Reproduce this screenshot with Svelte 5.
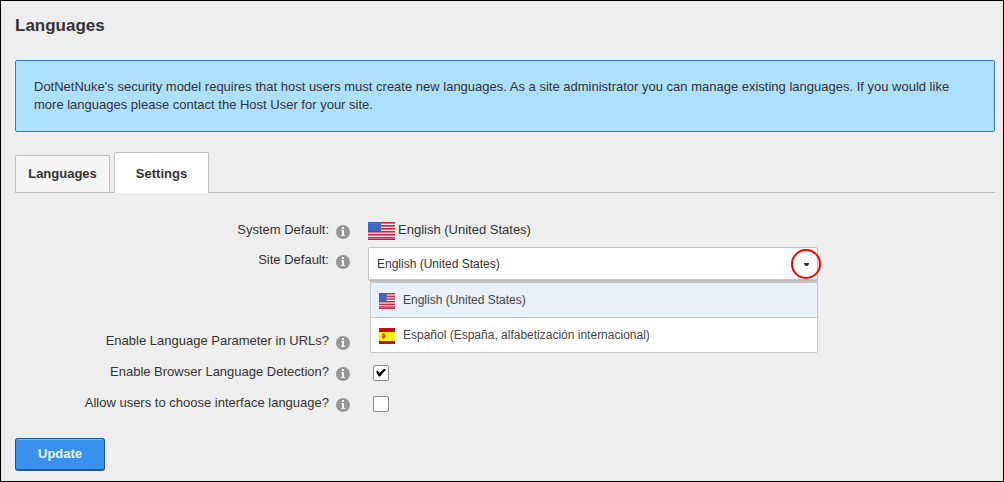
<script>
  const languages = [
    { code: 'en-US', name: 'English (United States)' },
    { code: 'es-ES', name: 'Español (España, alfabetización internacional)' }
  ];

  let siteDefault = $state('en-US');
  let urlParameter = $state(true);
  let browserDetection = $state(true);
  let userChoice = $state(false);
</script>

{#snippet usFlag(cls)}
  <svg class={cls} viewBox="0 0 27 18" preserveAspectRatio="none" aria-hidden="true">
    <rect width="27" height="18" fill="#f7e3e8" />
    {#each [0, 3, 6, 9, 12, 15] as y}
      <rect {y} width="27" height="1.6" fill="#cf2245" />
    {/each}
    <rect y="17" width="27" height="1" fill="#b5183a" />
    <rect width="13" height="9" fill="#3c62bd" />
    {#each [1.5, 3.5, 5.5, 7.5] as y}
      <path d="M1 {y}H13" stroke="#7893d6" stroke-width=".6" stroke-dasharray=".8 1.2" />
    {/each}
  </svg>
{/snippet}

{#snippet esFlag(cls)}
  <svg class={cls} viewBox="0 0 16 16" aria-hidden="true">
    <rect width="16" height="16" fill="#c40d25" />
    <rect y="4" width="16" height="9" fill="#ffef00" />
    <path d="M3 6h1v4H3zM6 6h1v4H6z" fill="#f2b632" />
    <path d="M4 5h1v1h1v4H5v1H4v-1H3V8h1V7H3V6h1z" fill="#d8502a" />
  </svg>
{/snippet}

{#snippet info()}
  <svg class="info" viewBox="0 0 14 14" aria-hidden="true">
    <circle cx="7" cy="7" r="7" fill="#969696" />
    <path d="M6 2h2v2H6zM5 5h3v5h1v1H5v-1h1V6H5z" fill="#f4f4f4" />
  </svg>
{/snippet}

<main class="page">
  <h1>Languages</h1>

  <p class="notice">
    DotNetNuke's security model requires that host users must create new languages. As a site
    administrator you can manage existing languages. If you would like more languages please contact
    the Host User for your site.
  </p>

  <nav class="tabs">
    <a class="tab" href="#languages">Languages</a>
    <a class="tab active" href="#settings" aria-current="page">Settings</a>
  </nav>

  <form onsubmit={(e) => e.preventDefault()}>
    <div class="row">
      <div class="caption"><span>System Default:</span>{@render info()}</div>
      <div class="value">{@render usFlag('flag-large')}<span>English (United States)</span></div>
    </div>

    <div class="row site">
      <div class="caption"><label for="site-default">Site Default:</label>{@render info()}</div>
      <div class="combo">
        <select id="site-default" bind:value={siteDefault}>
          {#each languages as language}
            <option value={language.code}>{language.name}</option>
          {/each}
        </select>
        <svg class="caret" viewBox="0 0 5 3" aria-hidden="true"><path d="M0 0h5v1L3.5 3h-2L0 1z" fill="#333" /></svg>
        <div class="menu">
          {#each languages as language}
            <button
              type="button"
              class="option"
              class:selected={language.code === siteDefault}
              onclick={() => (siteDefault = language.code)}
            >
              {#if language.code === 'en-US'}{@render usFlag('flag')}{:else}{@render esFlag('flag')}{/if}
              <span>{language.name}</span>
            </button>
          {/each}
        </div>
        <span class="ring"></span>
      </div>
    </div>

    <div class="row">
      <div class="caption"><label for="url-parameter">Enable Language Parameter in URLs?</label>{@render info()}</div>
      <input id="url-parameter" type="checkbox" bind:checked={urlParameter} />
    </div>
    <div class="row">
      <div class="caption"><label for="browser-detection">Enable Browser Language Detection?</label>{@render info()}</div>
      <input id="browser-detection" type="checkbox" bind:checked={browserDetection} />
    </div>
    <div class="row">
      <div class="caption"><label for="user-choice">Allow users to choose interface language?</label>{@render info()}</div>
      <input id="user-choice" type="checkbox" bind:checked={userChoice} />
    </div>

    <button class="update" type="submit">Update</button>
  </form>
</main>

<style>
  :global(body) {
    background: #eee;
  }

  .page {
    box-sizing: border-box;
    min-height: 100vh;
    padding: 14px 8px 10px 14px;
    border: 1px solid #000;
    background: #eee;
    color: #333;
    font: 13px/18px 'Liberation Sans', Arial, sans-serif;
  }

  h1 {
    margin: 0 0 23px;
    font-size: 17px;
    line-height: 22px;
  }

  .notice {
    margin: 0;
    padding: 17px 18px;
    border: 1px solid #2f7dc8;
    border-radius: 2px;
    background: #addfff;
  }

  .tabs {
    display: flex;
    align-items: flex-end;
    gap: 4px;
    margin-top: 20px;
    border-bottom: 1px solid #bfbfbf;
  }

  .tab {
    box-sizing: border-box;
    width: 95px;
    padding: 9px 0;
    border: 1px solid #bfbfbf;
    border-bottom: 0;
    border-radius: 2px 2px 0 0;
    background: #f5f5f5;
    color: #333;
    font-weight: bold;
    text-align: center;
    text-decoration: none;
  }

  .active {
    margin-bottom: -1px;
    padding: 12px 0 10px;
    background: #fff;
  }

  form {
    padding-top: 21px;
  }

  .row {
    display: grid;
    grid-template-columns: 335px minmax(0, 450px);
    column-gap: 18px;
    align-items: center;
    min-height: 31px;
  }

  .site {
    align-items: start;
    min-height: 78px;
    padding-top: 2px;
  }

  .caption {
    display: flex;
    justify-content: flex-end;
    align-items: flex-start;
    gap: 7px;
  }

  .site .caption {
    padding-top: 4px;
  }

  .info {
    flex: none;
    width: 14px;
    height: 14px;
    margin-top: 4px;
  }

  .value {
    display: flex;
    align-items: center;
    gap: 3px;
  }

  .flag-large {
    width: 27px;
    height: 18px;
    margin-top: 2px;
  }

  .combo {
    position: relative;
  }

  select {
    display: block;
    box-sizing: border-box;
    width: 100%;
    height: 33px;
    padding: 0 8px;
    border: 1px solid #c4c4c4;
    border-radius: 2px;
    background: #fff;
    box-shadow: 0 1px 0 #bbb;
    color: #333;
    font: inherit;
    font-size: 12px;
    appearance: none;
  }

  .caret {
    position: absolute;
    top: 16px;
    right: 9px;
    width: 5px;
    height: 3px;
  }

  .ring {
    position: absolute;
    z-index: 2;
    top: 2px;
    right: -3px;
    box-sizing: border-box;
    width: 30px;
    height: 30px;
    border: 2px solid #f00;
    border-radius: 50%;
    pointer-events: none;
  }

  .menu {
    position: absolute;
    z-index: 1;
    top: 34px;
    left: 2px;
    right: 0;
    border: 1px solid #c8c8c8;
    border-top-width: 2px;
    border-radius: 0 0 2px 2px;
    background: #fff;
  }

  .option {
    display: flex;
    align-items: center;
    gap: 8px;
    width: 100%;
    height: 34px;
    padding: 0 8px;
    border: 0;
    background: #fff;
    color: #444;
    font: inherit;
    font-size: 12px;
    text-align: left;
  }

  .option + .option {
    height: 35px;
    border-top: 1px solid #c8c8c8;
  }

  .selected {
    background: #e8f0fa;
  }

  .flag {
    width: 16px;
    height: 16px;
    margin-top: 2px;
  }

  input {
    display: grid;
    place-content: center;
    width: 16px;
    height: 16px;
    margin: 2px 0 0 5px;
    border: 1px solid #8a8a8a;
    border-radius: 2px;
    background: #fff;
    box-sizing: border-box;
    appearance: none;
  }

  input:checked::before {
    content: '';
    width: 10px;
    height: 8px;
    background: #000;
    clip-path: polygon(0 40%, 18% 28%, 36% 56%, 84% 0, 100% 14%, 40% 100%, 28% 100%);
  }

  .update {
    display: block;
    height: 33px;
    margin-top: 20px;
    padding: 0 22px;
    border: 1px solid #0d569f;
    border-bottom: 2px solid #2c5680;
    border-radius: 3px;
    background: #3891ec;
    box-shadow: inset 0 1px 0 #7cb8f5;
    color: #e9f2fc;
    font: inherit;
    font-weight: bold;
  }
</style>
